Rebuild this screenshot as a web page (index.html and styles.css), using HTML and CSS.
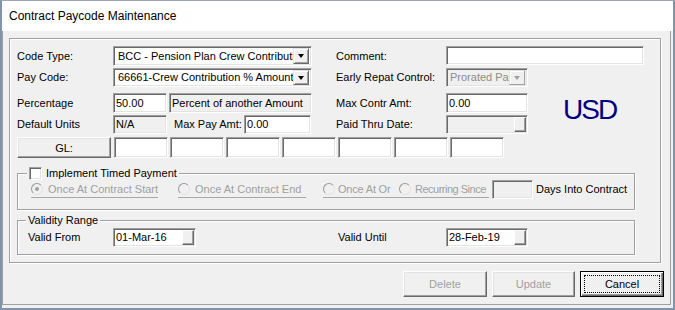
FILE: index.html
```html
<!DOCTYPE html>
<html lang="en">
<head>
    <meta charset="UTF-8">
    <title>Contract Paycode Maintenance</title>
    <link rel="stylesheet" href="styles.css">
</head>
<body>
    <div class="window">
        <div class="titlebar">Contract Paycode Maintenance</div>

        <div class="client">
            <div class="frame">
                <div class="form-grid">
                    <div class="lbl c1">Code Type:</div>
                    <div class="combo w198">
                        <span class="combo-text">BCC - Pension Plan Crew Contribution</span>
                        <span class="drop"><i class="arrow"></i></span>
                    </div>
                    <div class="lbl c4">Comment:</div>
                    <div class="edit comment h19"></div>

                    <div class="lbl c1 h19">Pay Code:</div>
                    <div class="combo w198 h19">
                        <span class="combo-text">66661-Crew Contribution % Amount</span>
                        <span class="drop"><i class="arrow"></i></span>
                    </div>
                    <div class="lbl c4 h19">Early Repat Control:</div>
                    <div class="combo disabled w81 h19">
                        <span class="combo-text">Prorated Pay</span>
                        <span class="drop"><i class="arrow"></i></span>
                    </div>

                    <div class="lbl c1">Percentage</div>
                    <div class="pair">
                        <div class="edit w54">50.00</div>
                        <div class="edit readonly w143">Percent of another Amount</div>
                    </div>
                    <div class="lbl c4">Max Contr Amt:</div>
                    <div class="edit w81">0.00</div>
                    <div class="currency">USD</div>

                    <div class="lbl c1 h19">Default Units</div>
                    <div class="pair">
                        <div class="edit readonly w54 h19">N/A</div>
                        <span class="lbl h19 inline">Max Pay Amt:</span>
                        <div class="edit w67 h19">0.00</div>
                    </div>
                    <div class="lbl c4 h19">Paid Thru Date:</div>
                    <div class="edit readonly date w81 h19">
                        <span class="date-text"></span>
                        <span class="spin"></span>
                    </div>
                </div>

                <div class="gl-row">
                    <button class="btn gl">GL:</button>
                    <div class="edit gl-seg"></div>
                    <div class="edit gl-seg"></div>
                    <div class="edit gl-seg"></div>
                    <div class="edit gl-seg"></div>
                    <div class="edit gl-seg"></div>
                    <div class="edit gl-seg"></div>
                    <div class="edit gl-seg"></div>
                </div>

                <fieldset class="group timed">
                    <legend><span class="check"></span>Implement Timed Payment</legend>
                    <div class="options">
                        <div class="radio opt-start checked"><span class="dot"></span>Once At Contract Start</div>
                        <div class="radio opt-end"><span class="dot"></span>Once At Contract End</div>
                        <div class="radio opt-or"><span class="dot"></span>Once At Or</div>
                        <div class="radio opt-rec"><span class="dot"></span>Recurring Since</div>
                        <div class="edit readonly days h19"></div>
                        <span class="days-lbl">Days Into Contract</span>
                    </div>
                </fieldset>

                <fieldset class="group validity">
                    <legend>Validity Range</legend>
                    <div class="valid-row">
                        <span class="lbl h19">Valid From</span>
                        <div class="edit date from h19">
                            <span class="date-text">01-Mar-16</span>
                            <span class="spin"></span>
                        </div>
                        <span class="lbl h19">Valid Until</span>
                        <div class="edit date until h19">
                            <span class="date-text">28-Feb-19</span>
                            <span class="spin"></span>
                        </div>
                    </div>
                </fieldset>
            </div>

            <div class="actions">
                <button class="btn action" disabled>Delete</button>
                <button class="btn action narrow" disabled>Update</button>
                <button class="btn action default">Cancel</button>
            </div>
        </div>
    </div>
</body>
</html>
```

FILE: styles.css
```css
* {
    margin: 0;
    padding: 0;
    box-sizing: border-box;
}

body {
    font-family: "Liberation Sans", Arial, sans-serif;
    font-size: 11px;
    color: #000;
    background: #f0f0f0;
}

/* Window chrome */
.window {
    width: 675px;
    height: 310px;
    display: flex;
    flex-direction: column;
    background: #f0f0f0;
    border: 2px solid #8393aa;
    border-top: 1px solid #9aa6b6;
}

.titlebar {
    height: 30px;
    flex: none;
    background: #fff;
    padding-left: 7px;
    font-size: 12px;
    line-height: 31px;
}

.client {
    flex: 1;
    margin: 0 2px 3px 0;
    border: 1px solid #a0a0a0;
    border-top: none;
    padding: 7px 6px 0 6px;
}

/* Etched outer frame */
.frame {
    width: 652px;
    height: 225px;
    border: 1px solid #a0a0a0;
    box-shadow: inset 1px 1px 0 #fff, 1px 1px 0 #fff;
    padding: 7px 0 0 7px;
    display: flex;
    flex-direction: column;
}

/* Top form */
.form-grid {
    display: grid;
    grid-template-columns: 96px 199px 24px 110px 81px 1fr;
    grid-template-rows: 22px 25px 22px 22px;
    align-items: start;
}

.lbl {
    line-height: 20px;
    white-space: nowrap;
}

.lbl.h19 {
    line-height: 19px;
}

.c1 { grid-column: 1; }
.c4 { grid-column: 4; }

.pair {
    display: flex;
    gap: 2px;
    align-items: start;
}

.pair .inline {
    margin-left: 5px;
}

.pair .w67 {
    margin-left: auto;
    margin-right: 1px;
}

.currency {
    grid-column: 6;
    grid-row: 3 / span 2;
    margin: 3px 0 0 36px;
    font-size: 28px;
    line-height: 28px;
    letter-spacing: -2px;
    color: #000080;
}

/* Sunken edit boxes */
.edit {
    height: 20px;
    background: #fff;
    border: 1px solid;
    border-color: #a0a0a0 #fff #fff #a0a0a0;
    box-shadow: inset 1px 1px 0 #696969, inset -1px -1px 0 #e3e3e3;
    padding: 0 2px;
    line-height: 18px;
    white-space: nowrap;
    overflow: hidden;
}

.edit.h19,
.combo.h19 {
    height: 19px;
    line-height: 17px;
}

.edit.readonly {
    background: #f0f0f0;
}

.comment { grid-column: 5 / 7; width: 198px; }
.w54 { width: 54px; }
.w67 { width: 67px; }
.w81 { width: 82px; }
.w143 { width: 143px; }
.w198 { width: 199px; }

/* Combo boxes */
.combo {
    display: flex;
    align-items: center;
    height: 20px;
    background: #fff;
    border: 1px solid;
    border-color: #a0a0a0 #fff #fff #a0a0a0;
    box-shadow: inset 1px 1px 0 #696969, inset -1px -1px 0 #e3e3e3;
    padding: 1px 2px 1px 1px;
}

.combo-text {
    flex: 1;
    overflow: hidden;
    white-space: nowrap;
    padding-left: 3px;
}

.drop {
    flex: none;
    width: 16px;
    height: 16px;
    background: #f0f0f0;
    border: 1px solid;
    border-color: #e3e3e3 #696969 #696969 #e3e3e3;
    box-shadow: inset 1px 1px 0 #fff, inset -1px -1px 0 #a0a0a0;
    display: flex;
    align-items: center;
    justify-content: center;
}

.combo.h19 .drop {
    height: 15px;
}

.arrow {
    width: 1px;
    height: 0;
    border-top: 4px solid #000;
    border-left: 3px solid transparent;
    border-right: 3px solid transparent;
}

.combo.disabled {
    background: #f0f0f0;
    color: #8d8d8d;
}

.combo.disabled .combo-text {
    padding-left: 2px;
}

.combo.disabled .drop {
    border-color: #e3e3e3 #a0a0a0 #a0a0a0 #e3e3e3;
    box-shadow: inset 1px 1px 0 #fff;
}

.combo.disabled .arrow {
    border-top-color: #a0a0a0;
}

/* Date pickers */
.edit.date {
    display: flex;
    align-items: center;
    padding: 0 1px 0 2px;
}

.date-text {
    flex: 1;
}

.spin {
    flex: none;
    width: 12px;
    height: 15px;
    background: #f0f0f0;
    border: 1px solid;
    border-color: #fff #696969 #696969 #fff;
    box-shadow: inset -1px -1px 0 #a0a0a0;
}

/* Buttons */
.btn {
    font: inherit;
    color: #000;
    background: #f0f0f0;
    border: 1px solid;
    border-color: #fff #696969 #696969 #fff;
    box-shadow: inset -1px -1px 0 #a0a0a0, inset 1px 1px 0 #e3e3e3;
    cursor: pointer;
}

.btn:disabled {
    color: #a0a0a0;
    cursor: default;
}

/* GL row */
.gl-row {
    display: flex;
    gap: 2px;
}

.gl {
    width: 94px;
    height: 21px;
    margin-right: 1px;
}

.gl-seg {
    width: 54px;
    height: 21px;
}

/* Group boxes */
.group {
    width: 618px;
    border: 1px solid #a0a0a0;
    box-shadow: inset 1px 1px 0 #fff, 1px 1px 0 #fff;
    min-width: 0;
}

.group legend {
    background: #f0f0f0;
    padding: 0 2px;
    line-height: 13px;
}

.timed {
    margin-top: 9px;
    padding: 0 0 10px 13px;
}

.timed legend {
    display: flex;
    align-items: center;
    gap: 4px;
    margin-left: -4px;
}

.check {
    width: 13px;
    height: 13px;
    background: #fff;
    border: 1px solid;
    border-color: #a0a0a0 #fff #fff #a0a0a0;
    box-shadow: inset 1px 1px 0 #696969, inset -1px -1px 0 #e3e3e3;
}

.options {
    display: flex;
    align-items: flex-start;
}

.radio {
    flex: none;
    display: flex;
    align-items: center;
    gap: 5px;
    height: 18px;
    color: #a0a0a0;
    border-bottom: 1px solid #a8a8a8;
    white-space: nowrap;
}

.dot {
    flex: none;
    width: 12px;
    height: 12px;
    border-radius: 50%;
    border: 1px solid;
    border-color: #9a9a9a #e3e3e3 #e3e3e3 #9a9a9a;
    background: #f0f0f0;
    display: flex;
    align-items: center;
    justify-content: center;
}

.radio.checked .dot::after {
    content: '';
    width: 4px;
    height: 4px;
    border-radius: 50%;
    background: #a0a0a0;
}

.opt-start { width: 127px; }
.opt-end { width: 128px; margin-left: 20px; }
.opt-or { width: 76px; margin-left: 17px; gap: 3px; letter-spacing: -0.2px; }
.opt-rec { width: 90px; gap: 4px; letter-spacing: -0.5px; }

.days {
    flex: none;
    width: 41px;
    margin-left: 3px;
}

.days-lbl {
    margin-left: 3px;
    line-height: 19px;
    white-space: nowrap;
}

.validity {
    margin-top: 4px;
    padding: 1px 0 7px 10px;
}

.validity legend {
    margin-left: -2px;
}

.valid-row {
    display: grid;
    grid-template-columns: 85px 225px 108px 82px;
    align-items: center;
}

.from { width: 83px; }
.until { width: 82px; }

/* Dialog buttons */
.actions {
    display: flex;
    justify-content: flex-end;
    gap: 5px;
    margin-top: 8px;
}

.action {
    width: 84px;
    height: 26px;
}

.action.narrow {
    width: 83px;
}

.action.default {
    position: relative;
    border: 1px solid #000;
    box-shadow: inset 1px 1px 0 #fff, inset -1px -1px 0 #696969, inset -2px -2px 0 #a0a0a0;
}

.action.default::after {
    content: '';
    position: absolute;
    inset: 3px;
    border: 1px dotted #000;
}
```
